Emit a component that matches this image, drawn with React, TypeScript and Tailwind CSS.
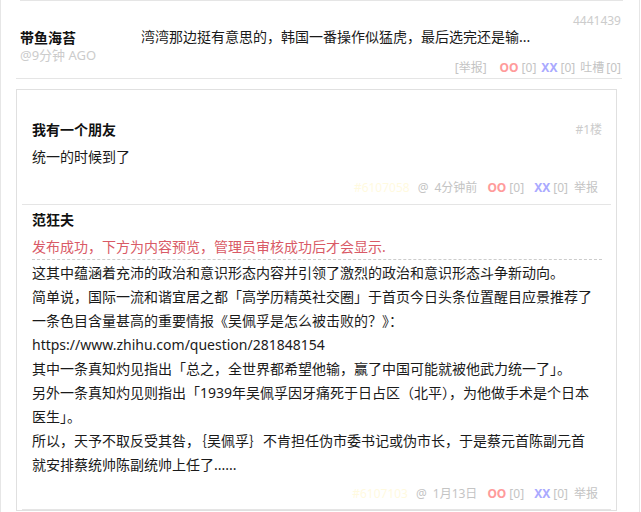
import React from "react";

const tucaoLines = [
  "这其中蕴涵着充沛的政治和意识形态内容并引领了激烈的政治和意识形态斗争新动向。",
  "简单说，国际一流和谐宜居之都「高学历精英社交圈」于首页今日头条位置醒目应景推荐了",
  "一条色目含量甚高的重要情报《吴佩孚是怎么被击败的？》：",
  "https://www.zhihu.com/question/281848154",
  "其中一条真知灼见指出「总之，全世界都希望他输，赢了中国可能就被他武力统一了」。",
  "另外一条真知灼见则指出「1939年吴佩孚因牙痛死于日占区（北平），为他做手术是个日本",
  "医生」。",
  "所以，天予不取反受其咎，｛吴佩孚｝不肯担任伪市委书记或伪市长，于是蔡元首陈副元首",
  "就安排蔡统帅陈副统帅上任了......",
];

function TucaoFooter({ id, time }: { id: string; time: string }) {
  return (
    <div className="flex justify-end pr-[4px] text-[12px] leading-[16px] text-[#c4c4c4] whitespace-nowrap">
      <span className="text-[#fffadf]">{id}</span>
      <span className="ml-[8px]">@</span>
      <span className="ml-[6px]">{time}</span>
      <span className="ml-[10px] font-bold text-[#ff9b9b]">OO</span>
      <span className="ml-[3px]">[0]</span>
      <span className="ml-[10px] font-bold text-[#aaaaff]">XX</span>
      <span className="ml-[3px]">[0]</span>
      <span className="ml-[6px]">举报</span>
    </div>
  );
}

export default function App() {
  return (
    <div className="w-[640px] h-[512px] overflow-hidden bg-white border-x border-[#e6e6e6] font-['Noto_Sans','Noto_Sans_CJK_SC',sans-serif] text-[#1a1a1a]">
      <div className="ml-[19px] w-[603px] border-t border-[#e5e5e5]" />

      {/* comment */}
      <div className="ml-[15px] w-[606px] h-[78px] border-b border-[#e5e5e5]">
        <div className="flex justify-end pr-[1px] pt-[13px] text-[12px] leading-[14px] text-[#cccccc]">
          4441439
        </div>
        <div className="flex">
          <div className="w-[125px] pl-[4px]">
            <div className="text-[14px] leading-[20px] font-bold text-[#111]">带鱼海苔</div>
            <div className="text-[13px] leading-[14px] text-[#cccccc]">@9分钟 AGO</div>
          </div>
          <div className="flex-1 pr-[1px]">
            <div className="text-[14px] leading-[18px]">
              湾湾那边挺有意思的，韩国一番操作似猛虎，最后选完还是输...
            </div>
            <div className="mt-[14px] flex justify-end text-[12px] leading-[16px] text-[#c4c4c4] whitespace-nowrap">
              <span>[举报]</span>
              <span className="ml-[13px] font-bold text-[#ff9b9b]">OO</span>
              <span className="ml-[3px]">[0]</span>
              <span className="ml-[5px] font-bold text-[#aaaaff]">XX</span>
              <span className="ml-[3px]">[0]</span>
              <span className="ml-[5px]">吐槽</span>
              <span className="ml-[2px]">[0]</span>
            </div>
          </div>
        </div>
      </div>

      {/* tucao box */}
      <div className="mt-[10px] ml-[15px] w-[601px] border border-[#e0e0e0]">
        <div className="mx-[5px] pl-[10px] pr-[9px] pt-[30px] pb-[8px] border-b border-[#e5e5e5]">
          <div className="flex items-center justify-between">
            <span className="text-[14px] leading-[20px] font-bold text-[#111]">我有一个朋友</span>
            <span className="text-[12px] text-[#cccccc]">#1楼</span>
          </div>
          <div className="mt-[8px] text-[14px] leading-[18px]">统一的时候到了</div>
          <div className="mt-[14px]">
            <TucaoFooter id="#6107058" time="4分钟前" />
          </div>
        </div>

        <div className="mx-[5px] pl-[10px] pr-[9px] pt-[5px] pb-[7px] border-b border-[#e5e5e5]">
          <div className="text-[14px] leading-[20px] font-bold text-[#111]">范狂夫</div>
          <div className="mt-[5px] text-[14px] leading-[24px] text-[#d95a66] border-b border-dashed border-[#cccccc]">
            发布成功，下方为内容预览，管理员审核成功后才会显示.
          </div>
          <div className="mt-[1px] text-[14px] leading-[24px] whitespace-nowrap">
            {tucaoLines.map((line, i) => (
              <div key={i}>{line}</div>
            ))}
          </div>
          <div className="mt-[9px]">
            <TucaoFooter id="#6107103" time="1月13日" />
          </div>
        </div>
      </div>
    </div>
  );
}
